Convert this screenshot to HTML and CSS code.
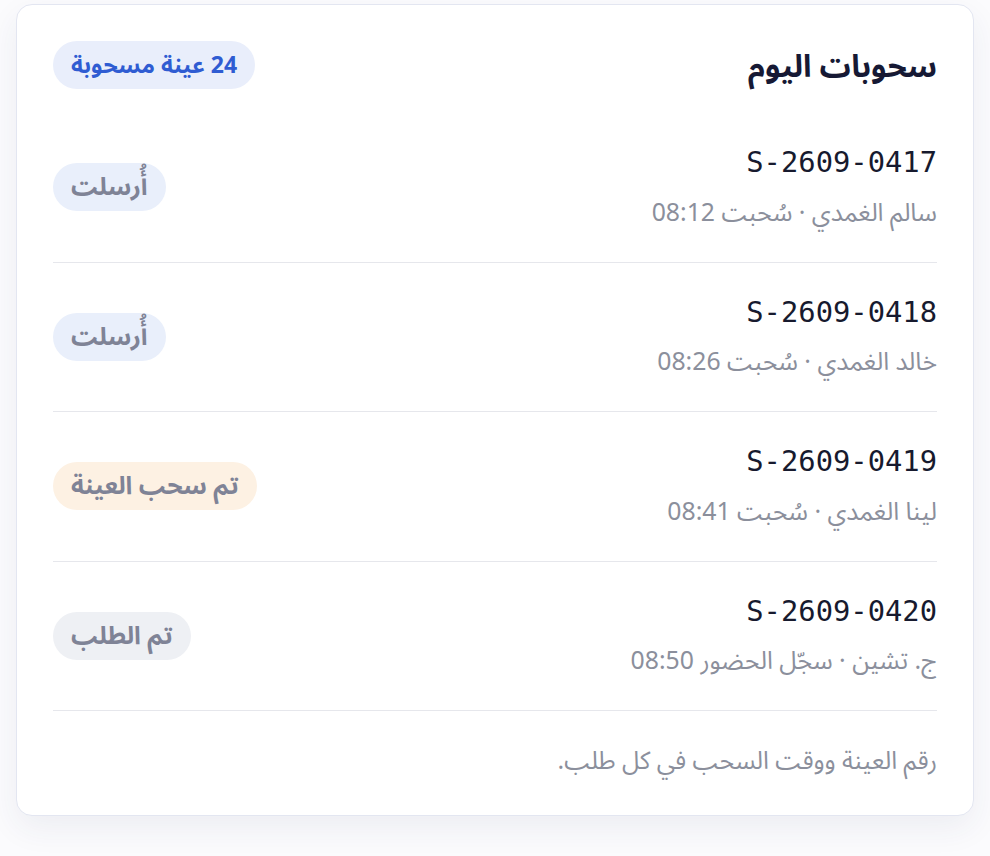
FILE: index.html
```html
<!DOCTYPE html>
<html lang="ar" dir="rtl">
<head>
<meta charset="utf-8">
<link rel="stylesheet" href="styles.css">
</head>
<body>
<main class="page">
  <section class="card">
    <header class="card-head">
      <h2 class="title">سحوبات اليوم</h2>
      <span class="count-badge">24 عينة مسحوبة</span>
    </header>
    <ul class="list">
      <li class="row">
        <div class="info">
          <div class="sid">S-2609-0417</div>
          <div class="meta">سالم الغمدي · سُحبت 08:12</div>
        </div>
        <span class="pill pill-sent">أُرسلت</span>
      </li>
      <li class="row">
        <div class="info">
          <div class="sid">S-2609-0418</div>
          <div class="meta">خالد الغمدي · سُحبت 08:26</div>
        </div>
        <span class="pill pill-sent">أُرسلت</span>
      </li>
      <li class="row">
        <div class="info">
          <div class="sid">S-2609-0419</div>
          <div class="meta">لينا الغمدي · سُحبت 08:41</div>
        </div>
        <span class="pill pill-drawn">تم سحب العينة</span>
      </li>
      <li class="row">
        <div class="info">
          <div class="sid">S-2609-0420</div>
          <div class="meta">ج. تشين · سجّل الحضور 08:50</div>
        </div>
        <span class="pill pill-ordered">تم الطلب</span>
      </li>
    </ul>
    <p class="foot">رقم العينة ووقت السحب في كل طلب.</p>
  </section>
</main>
</body>
</html>
```
FILE: styles.css
```css
* { box-sizing: border-box; }
html, body { margin: 0; padding: 0; }
body {
  background: #fbfbfd;
  font-family: "Noto Sans Arabic", "Noto Sans", sans-serif;
  color: #171a2e;
}
.page {
  padding: 4px 16px 40px;
}
.card {
  background: #ffffff;
  border: 1px solid #e3e6f1;
  border-radius: 16px;
  box-shadow: 0 12px 32px rgba(40, 50, 100, 0.07);
  padding: 36px;
}
.card-head {
  display: flex;
  align-items: center;
  justify-content: space-between;
  height: 48px;
  margin-bottom: 24px;
}
.title {
  margin: 6px 0 0;
  font-size: 31px;
  font-weight: 700;
  color: #161934;
  line-height: 1.4;
}
.count-badge {
  display: inline-flex;
  align-items: center;
  height: 48px;
  padding: 0 18px;
  border-radius: 999px;
  background: #e9eefb;
  color: #2f5cd2;
  font-size: 23px;
  font-weight: 700;
}
.list {
  list-style: none;
  margin: 0;
  padding: 0;
}
.row {
  display: flex;
  align-items: center;
  justify-content: space-between;
  height: 149.5px;
  border-bottom: 1px solid #e6e7ec;
}
.info {
  display: flex;
  flex-direction: column;
  gap: 14px;
}
.sid {
  font-family: "DejaVu Sans Mono", monospace;
  font-size: 28.8px;
  line-height: 1.3;
  color: #171a2e;
  direction: ltr;
  text-align: right;
}
.meta {
  font-size: 24.8px;
  line-height: 1.4;
  color: #8b8f9c;
}
.pill {
  display: inline-flex;
  align-items: center;
  height: 48px;
  padding: 0 18px;
  border-radius: 999px;
  font-size: 24.8px;
  font-weight: 700;
  color: #7f8396;
}
.pill-sent { background: #e9effb; }
.pill-drawn { background: #fdf1e3; }
.pill-ordered { background: #eef0f4; }
.foot {
  margin: 0;
  padding-top: 33px;
  font-size: 24.8px;
  line-height: 1.4;
  color: #8b8f9c;
}
```
